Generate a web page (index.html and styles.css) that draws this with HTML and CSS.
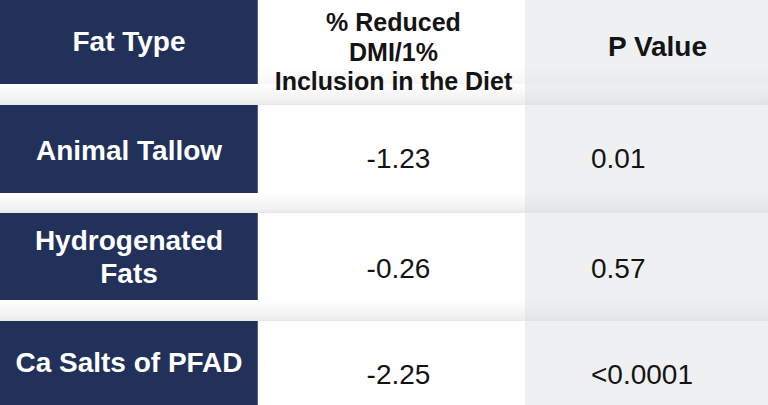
FILE: index.html
```html
<!DOCTYPE html>
<html>
<head>
<meta charset="utf-8">
<link rel="stylesheet" href="styles.css">
</head>
<body>
<div class="table">
  <div class="row row-head">
    <div class="label label-head">Fat Type</div>
    <div class="head-mid">% Reduced<br>DMI/1%<br>Inclusion in the Diet</div>
    <div class="head-p">P Value</div>
  </div>
  <div class="sep sep-a"><div class="s1"></div><div class="s1"></div><div class="s3"></div></div>
  <div class="row row-a">
    <div class="label label-a">Animal Tallow</div>
    <div class="val">-1.23</div>
    <div class="pval">0.01</div>
  </div>
  <div class="sep sep-b"><div class="s1"></div><div class="s1"></div><div class="s3"></div></div>
  <div class="row row-b">
    <div class="label label-two">Hydrogenated<br>Fats</div>
    <div class="val val-low">-0.26</div>
    <div class="pval val-low">0.57</div>
  </div>
  <div class="sep sep-a"><div class="s1"></div><div class="s1"></div><div class="s3"></div></div>
  <div class="row row-c">
    <div class="label">Ca Salts of PFAD</div>
    <div class="val val-low">-2.25</div>
    <div class="pval val-low">&lt;0.0001</div>
  </div>
</div>
</body>
</html>
```
FILE: styles.css
```css
html, body {
  margin: 0;
  padding: 0;
  background: #ffffff;
}
body {
  width: 768px;
  height: 405px;
  overflow: hidden;
  font-family: "Liberation Sans", Arial, Helvetica, sans-serif;
  color: #141414;
}
.table {
  display: flex;
  flex-direction: column;
}
.row, .sep {
  display: grid;
  grid-template-columns: 258px 267px 1fr;
  grid-template-rows: minmax(0, 1fr);
  flex: none;
}
.row-head { height: 84px; }
.row-a { height: 88px; }
.row-b { height: 87px; }
.row-c { height: 84px; }
.sep-a { height: 21px; }
.sep-b { height: 20px; }

.s1 {
  background: linear-gradient(#ffffff 0%, #f7f7f7 45%, #efefef 85%, #e6e7e8 100%);
}
.s3 {
  background: linear-gradient(#eceef0 0%, #e8e9eb 60%, #e2e3e5 100%);
}

.label {
  background: #22315a;
  color: #ffffff;
  font-weight: 700;
  font-size: 28px;
  display: flex;
  align-items: center;
  justify-content: center;
  text-align: center;
  box-shadow: inset -1px 0 0 #56617f;
}
.label-a {
  padding-top: 4px;
}
.label-two {
  line-height: 33px;
}
.head-mid {
  position: relative;
  z-index: 1;
  font-weight: 700;
  font-size: 25px;
  line-height: 29.5px;
  text-align: center;
  padding-top: 8px;
  padding-left: 4px;
  background: linear-gradient(#ffffff 80%, #f6f6f6 100%);
}
.head-p {
  background: linear-gradient(#eff0f2 75%, #eaebed 100%);
  font-weight: 700;
  font-size: 28px;
  display: flex;
  align-items: center;
  justify-content: center;
  padding-left: 22px;
  padding-top: 9px;
}
.val {
  background: #ffffff;
  font-size: 28px;
  display: flex;
  align-items: center;
  justify-content: center;
  padding-left: 14px;
  padding-top: 20px;
}
.pval {
  background: #eff0f2;
  font-size: 28px;
  display: flex;
  align-items: center;
  padding-left: 66px;
  padding-top: 20px;
}
.val-low {
  padding-top: 24px;
}
```
